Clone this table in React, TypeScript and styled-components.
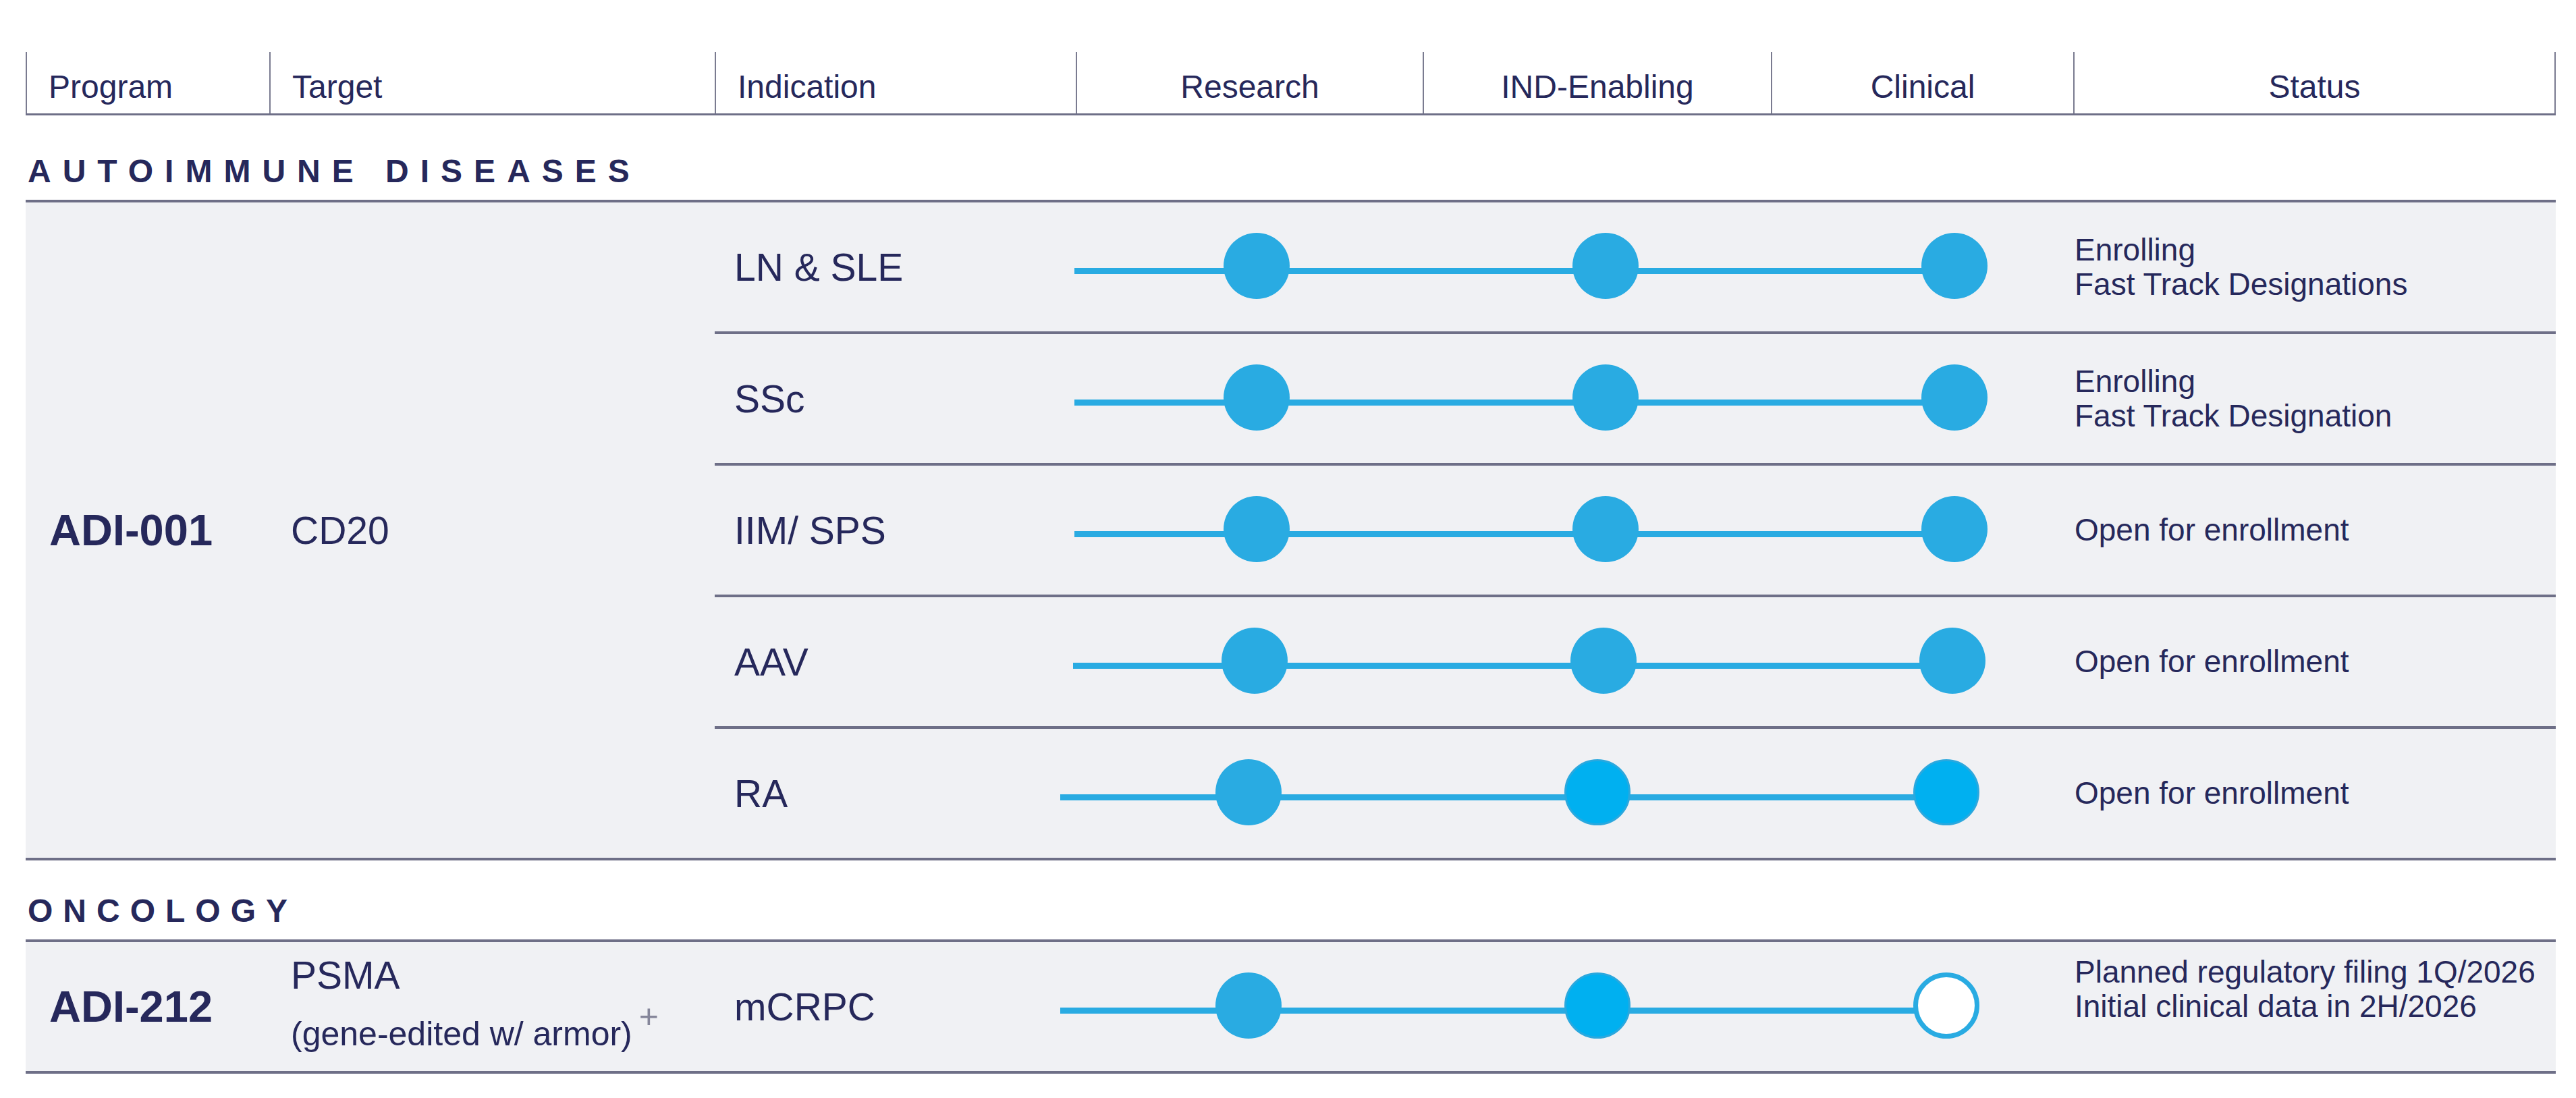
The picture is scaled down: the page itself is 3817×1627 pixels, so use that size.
import React from 'react';
import styled, { createGlobalStyle } from 'styled-components';

const NAVY = '#26285b';
const RULE = '#6e6f87';
const CYAN = '#29abe2';

const GlobalStyle = createGlobalStyle`
    *, *::before, *::after { box-sizing: border-box; }
    html, body { margin: 0; padding: 0; background: #ffffff; }
    body {
        font-family: 'Liberation Sans', Arial, Helvetica, sans-serif;
        color: ${NAVY};
    }
`;

const Page = styled.div`
    padding: 77px 0 40px 38px;
    width: 3787px;
`;

const Table = styled.div`
    width: 3749px;
`;

const HeaderRow = styled.div`
    display: grid;
    grid-template-columns: 361px 660px 535px 514px 516px 448px 715px;
    height: 94px;
    border-bottom: 3px solid ${RULE};
`;

const HeaderCell = styled.div<{ $center?: boolean; $last?: boolean }>`
    display: flex;
    align-items: center;
    justify-content: ${p => (p.$center ? 'center' : 'flex-start')};
    padding: 12px 0 0 ${p => (p.$center ? 0 : 32)}px;
    border-left: 2px solid #7a7b90;
    border-right: ${p => (p.$last ? '2px solid #7a7b90' : 'none')};
    font-size: 48px;
    white-space: nowrap;
`;

const SectionTitle = styled.div<{ $top: number; $spacing: number }>`
    padding: ${p => p.$top}px 0 19px 3px;
    font-size: 48px;
    line-height: 46px;
    font-weight: 700;
    letter-spacing: ${p => p.$spacing}px;
    text-transform: uppercase;
    white-space: nowrap;
`;

const SectionBody = styled.div`
    display: grid;
    grid-template-columns: 361px 660px 2728px;
    background: #f0f1f4;
    border-top: 4px solid ${RULE};
    border-bottom: 4px solid ${RULE};
`;

const ProgramCell = styled.div`
    display: flex;
    align-items: center;
    padding-left: 35px;
    font-size: 65px;
    font-weight: 700;
    white-space: nowrap;
`;

const TargetCell = styled.div<{ $raise?: number }>`
    display: flex;
    flex-direction: column;
    justify-content: center;
    padding: 0 0 ${p => p.$raise || 0}px 32px;
    font-size: 57px;
    white-space: nowrap;
`;

const TargetMain = styled.div`
    line-height: 66px;
`;

const TargetNote = styled.div`
    margin-top: 26px;
    font-size: 50px;
    line-height: 56px;
`;

const Plus = styled.span`
    margin-left: 10px;
    font-size: 50px;
    line-height: 0;
    color: #85869a;
    vertical-align: 26px;
`;

const Rows = styled.div`
    display: flex;
    flex-direction: column;
`;

const Row = styled.div`
    display: grid;
    grid-template-columns: 535px 1478px 715px;
    height: 191px;

    & + & {
        height: 195px;
        border-top: 4px solid ${RULE};
    }
`;

const IndicationCell = styled.div`
    display: flex;
    align-items: center;
    padding-left: 29px;
    font-size: 57px;
    white-space: nowrap;
`;

const TrackCell = styled.div`
    display: flex;
    align-items: center;
`;

const StatusCell = styled.div<{ $raise?: number }>`
    display: flex;
    flex-direction: column;
    justify-content: center;
    padding: 0 0 ${p => p.$raise || 0}px 2px;
    font-size: 46px;
    line-height: 1.1;
    white-space: nowrap;
`;

type Dot = 'fill' | 'bright' | 'open';

type Phase = {
    indication: string;
    dots: Dot[];
    shift: number;
    lineStart: number;
    status: string[];
};

const Track = ({ dots, shift, lineStart }: { dots: Dot[]; shift: number; lineStart: number }) => {
    const xs = [268, 785, 1302].map(x => x + shift);
    return (
        <svg width={1478} height={110} viewBox="0 0 1478 110" overflow="visible">
            <rect x={lineStart} y={56} width={xs[2] - lineStart} height={9} fill={CYAN} />
            {xs.map((cx, i) => {
                if (dots[i] === 'bright') {
                    return <circle key={i} cx={cx} cy={53} r={47.5} fill="#00b0f0" stroke="#2aa8de" strokeWidth={3} />;
                }
                if (dots[i] === 'open') {
                    return <circle key={i} cx={cx} cy={53} r={45.5} fill="#ffffff" stroke={CYAN} strokeWidth={7} />;
                }
                return <circle key={i} cx={cx} cy={53} r={49} fill={CYAN} />;
            })}
        </svg>
    );
};

const autoimmune: Phase[] = [
    { indication: 'LN & SLE', dots: ['fill', 'fill', 'fill'], shift: 0, lineStart: -2, status: ['Enrolling', 'Fast Track Designations'] },
    { indication: 'SSc', dots: ['fill', 'fill', 'fill'], shift: 0, lineStart: -2, status: ['Enrolling', 'Fast Track Designation'] },
    { indication: 'IIM/ SPS', dots: ['fill', 'fill', 'fill'], shift: 0, lineStart: -2, status: ['Open for enrollment'] },
    { indication: 'AAV', dots: ['fill', 'fill', 'fill'], shift: -3, lineStart: -4, status: ['Open for enrollment'] },
    { indication: 'RA', dots: ['fill', 'bright', 'bright'], shift: -12, lineStart: -23, status: ['Open for enrollment'] },
];

const oncology: Phase[] = [
    {
        indication: 'mCRPC',
        dots: ['fill', 'bright', 'open'],
        shift: -12,
        lineStart: -23,
        status: ['Planned regulatory filing 1Q/2026', 'Initial clinical data in 2H/2026'],
    },
];

const PhaseRow = ({ phase, raise }: { phase: Phase; raise?: number }) => (
    <Row>
        <IndicationCell>{phase.indication}</IndicationCell>
        <TrackCell>
            <Track dots={phase.dots} shift={phase.shift} lineStart={phase.lineStart} />
        </TrackCell>
        <StatusCell $raise={raise}>
            {phase.status.map(line => (
                <div key={line}>{line}</div>
            ))}
        </StatusCell>
    </Row>
);

const columns = [
    { label: 'Program', center: false },
    { label: 'Target', center: false },
    { label: 'Indication', center: false },
    { label: 'Research', center: true },
    { label: 'IND-Enabling', center: true },
    { label: 'Clinical', center: true },
    { label: 'Status', center: true },
];

const App = () => {
    return (
        <Page>
            <GlobalStyle />
            <Table>
                <HeaderRow>
                    {columns.map((c, i) => (
                        <HeaderCell key={c.label} $center={c.center} $last={i === columns.length - 1}>
                            {c.label}
                        </HeaderCell>
                    ))}
                </HeaderRow>

                <SectionTitle $top={60} $spacing={17}>Autoimmune Diseases</SectionTitle>
                <SectionBody>
                    <ProgramCell>ADI-001</ProgramCell>
                    <TargetCell>CD20</TargetCell>
                    <Rows>
                        {autoimmune.map(p => (
                            <PhaseRow key={p.indication} phase={p} />
                        ))}
                    </Rows>
                </SectionBody>

                <SectionTitle $top={52} $spacing={15}>Oncology</SectionTitle>
                <SectionBody>
                    <ProgramCell>ADI-212</ProgramCell>
                    <TargetCell $raise={12}>
                        <TargetMain>PSMA</TargetMain>
                        <TargetNote>
                            (gene-edited w/ armor)<Plus>+</Plus>
                        </TargetNote>
                    </TargetCell>
                    <Rows>
                        {oncology.map(p => (
                            <PhaseRow key={p.indication} phase={p} raise={52} />
                        ))}
                    </Rows>
                </SectionBody>
            </Table>
        </Page>
    );
};

export default App;
